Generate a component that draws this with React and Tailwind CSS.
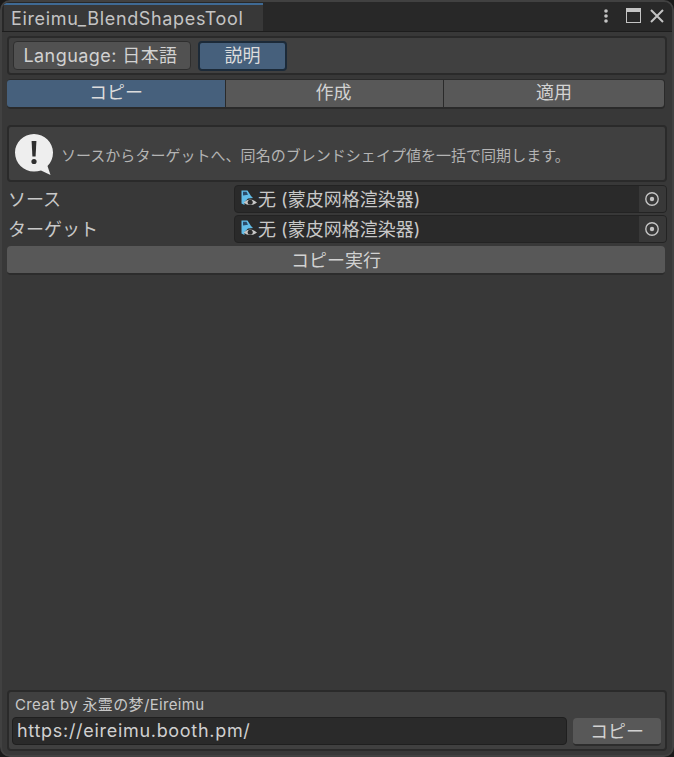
const font = "font-['Inter','Noto_Sans_CJK_JP',sans-serif]"

function MeshIcon() {
  return (
    <svg width="18" height="18" viewBox="0 0 18 18" className="shrink-0">
      <path d="M1.5 0.5 L7.5 0.5 L11 6 L13 8 L8 8.5 L4.5 12 L4.5 15 L1.5 13.5 Z" fill="#62bde8" />
      <path d="M3 1.8 L6.5 1.8 L8 4.8 L3 5.5 Z" fill="#2b4c6a" />
      <path d="M3.5 12.5 Q10 6.5 17 12.5 Q10 17.5 3.5 12.5 Z" fill="#c8c8c8" />
      <circle cx="10.2" cy="12.2" r="2.5" fill="#2a2a2a" />
    </svg>
  )
}

function ObjectField({ label }) {
  return (
    <div className="flex items-center h-[28px]">
      <div className="w-[227px] shrink-0 pl-px pt-[1px] text-[18px] text-[#c8c8c8]">{label}</div>
      <div className="flex-1 h-[28px] flex items-center rounded-[4px] bg-[#2a2a2a] border border-[#232323] overflow-hidden">
        <div className="flex-1 flex items-center pl-[5px] text-[18px] text-[#c8c8c8] font-['Inter','Noto_Sans_CJK_SC',sans-serif]">
          <MeshIcon />
          <span>无 (蒙皮网格渲染器)</span>
        </div>
        <div className="w-[27px] h-full bg-[#383838] flex items-center justify-center">
          <svg width="16" height="16" viewBox="0 0 16 16" className="mr-[2px]">
            <circle cx="8" cy="8" r="6.2" fill="none" stroke="#c4c4c4" strokeWidth="1.4" />
            <circle cx="8" cy="8" r="2.2" fill="#c4c4c4" />
          </svg>
        </div>
      </div>
    </div>
  )
}

export default function App() {
  return (
    <div className={`${font} relative w-[674px] h-[757px] bg-[#191919] overflow-hidden`}>
      <div className="w-full h-full flex flex-col bg-[#383838] rounded-[10px] border-2 border-[#414141] overflow-hidden">
        {/* title bar */}
        <div className="h-[30px] shrink-0 flex items-end bg-[#282828] border-b border-[#1d1d1d]">
          <div className="ml-[2px] w-[259px] h-[28px] bg-[#383838] border-t-[2px] border-[#3f6a94] pl-[7px] text-[18px] leading-[27px] text-[#c4c4c4] tracking-[0.65px]">
            Eireimu_BlendShapesTool
          </div>
          <div className="ml-auto flex items-center h-full pr-[8px] pb-[2px]">
            <svg width="6" height="16" viewBox="0 0 6 16" className="mr-[17px]">
              <circle cx="3" cy="3" r="1.8" fill="#c4c4c4" />
              <circle cx="3" cy="8" r="1.8" fill="#c4c4c4" />
              <circle cx="3" cy="13" r="1.8" fill="#c4c4c4" />
            </svg>
            <svg width="15" height="15" viewBox="0 0 15 15" className="mr-[9px]">
              <rect x="0.5" y="0.5" width="14" height="14" fill="none" stroke="#c4c4c4" />
              <rect x="0" y="0" width="15" height="4" fill="#c4c4c4" />
            </svg>
            <svg width="14" height="14" viewBox="0 0 14 14">
              <path d="M1 1 L13 13 M13 1 L1 13" stroke="#c4c4c4" strokeWidth="2" />
            </svg>
          </div>
        </div>

        <div className="flex-1 flex flex-col px-[5px] pt-[4px] pb-[4px]">
          {/* language row */}
          <div className="h-[39px] shrink-0 flex items-center gap-[7px] px-[4px] bg-[#404040] border-2 border-[#2a2a2a] rounded-[4px]">
            <button className="w-[178px] h-[29px] pr-[3px] rounded-[4px] bg-[#515151] border border-[#2e2e2e] text-[18px] text-[#d2d2d2] tracking-[0.43px]">
              Language: 日本語
            </button>
            <button className="w-[89px] h-[30px] leading-[24px] rounded-[4px] bg-[#46607c] border-2 border-[#1c2a38] text-[18px] text-[#dcdcdc]">
              説明
            </button>
          </div>

          {/* tabs */}
          <div className="mt-[4px] h-[30px] shrink-0 flex gap-px bg-[#2a2a2a] rounded-[4px] pt-[1px] pb-[2px] mr-[2px] pr-px">
            <div className="w-[218px] pb-[2px] flex items-center justify-center rounded-l-[3px] bg-[#46607c] text-[18px] text-[#dcdcdc]">コピー</div>
            <div className="w-[217px] pb-[2px] pr-[2px] flex items-center justify-center bg-[#585858] text-[18px] text-[#d2d2d2]">作成</div>
            <div className="flex-1 pb-[2px] flex items-center justify-center rounded-r-[3px] bg-[#585858] text-[18px] text-[#d2d2d2]">適用</div>
          </div>

          {/* help box */}
          <div className="mt-[16px] h-[57px] shrink-0 flex items-center pl-[6px] gap-[7px] bg-[#404040] border-2 border-[#2a2a2a] rounded-[4px]">
            <svg width="40" height="43" viewBox="0 0 40 43" className="shrink-0 mt-[1px] -ml-px">
              <path d="M20 1 C30.5 1 39 9.5 39 19.5 C39 25 37 29.5 33.5 33 L36.5 42 L27 37.5 C24.8 38.2 22.5 38.6 20 38.6 C9.5 38.6 1 30 1 19.5 C1 9.5 9.5 1 20 1 Z" fill="#eeeeee" />
              <path d="M17.6 8 H22.4 L21.6 23.5 H18.4 Z" fill="#2f2f2f" />
              <circle cx="20" cy="28.5" r="2.6" fill="#2f2f2f" />
            </svg>
            <span className="pt-[5px] text-[15px] tracking-[0.03px] text-[#b4b4b4] whitespace-nowrap">ソースからターゲットへ、同名のブレンドシェイプ値を一括で同期します。</span>
          </div>

          <div className="mt-[3px] flex flex-col gap-[2px]">
            <ObjectField label="ソース" />
            <ObjectField label="ターゲット" />
          </div>

          <button className="mt-[3px] h-[29px] pt-[1px] shrink-0 rounded-[4px] mr-[2px] bg-[#585858] border-b-2 border-[#2c2c2c] text-[18px] text-[#d2d2d2]">
            コピー実行
          </button>

          {/* footer */}
          <div className="mt-auto h-[61px] shrink-0 flex flex-col bg-[#404040] border-2 border-[#2a2a2a] rounded-[4px] px-[3px]">
            <div className="pl-[3px] pt-[1px] text-[15px] leading-[24px] text-[#c8c8c8] tracking-[0.35px]">Creat by 永霊の梦/Eireimu</div>
            <div className="flex gap-[6px]">
              <div className="w-[555px] h-[28px] rounded-[4px] bg-[#2a2a2a] border border-[#1f1f1f] pl-[4px] text-[18px] leading-[26px] text-[#d0d0d0] tracking-[0.7px]">
                https://eireimu.booth.pm/
              </div>
              <button className="w-[88px] h-[28px] mt-px rounded-[4px] bg-[#585858] border-b-2 border-[#2c2c2c] text-[18px] text-[#d2d2d2]">
                コピー
              </button>
            </div>
          </div>
        </div>
      </div>
    </div>
  )
}
